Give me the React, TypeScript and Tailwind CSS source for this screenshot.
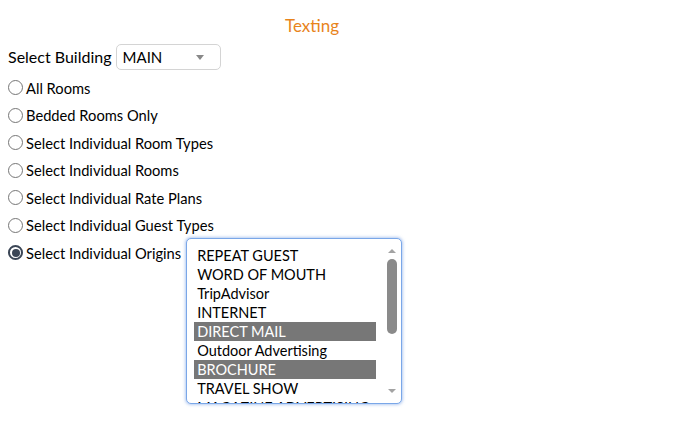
import React, { useState } from 'react';

const SCOPES = [
  'All Rooms',
  'Bedded Rooms Only',
  'Select Individual Room Types',
  'Select Individual Rooms',
  'Select Individual Rate Plans',
  'Select Individual Guest Types',
  'Select Individual Origins',
];

const ORIGINS = [
  'REPEAT GUEST',
  'WORD OF MOUTH',
  'TripAdvisor',
  'INTERNET',
  'DIRECT MAIL',
  'Outdoor Advertising',
  'BROCHURE',
  'TRAVEL SHOW',
  'MAGAZINE ADVERTISING',
];

const Radio: React.FC<{ checked: boolean }> = ({ checked }) => (
  <span
    className={
      checked
        ? 'flex items-center justify-center w-[15px] h-[15px] rounded-full border-2 border-[#3b4656] bg-white shrink-0'
        : 'w-[15px] h-[15px] rounded-full border border-[#767676] bg-white shrink-0'
    }
  >
    {checked && <span className="w-[8px] h-[8px] rounded-full bg-[#3b4656]" />}
  </span>
);

const OriginList: React.FC<{ selected: string[] }> = ({ selected }) => (
  <div className="relative w-[216px] h-[166px] rounded-[5px] border border-[#7aa7e8] shadow-[0_0_3px_1px_rgba(120,160,230,0.55)] bg-white overflow-hidden">
    <div className="pl-[7px] pt-[7px] w-[189px]">
      {ORIGINS.map(o => (
        <div
          key={o}
          className={
            selected.includes(o)
              ? 'h-[19px] pl-[3px] leading-[19px] text-[14.5px] bg-[#777777] text-white whitespace-nowrap'
              : 'h-[19px] pl-[3px] leading-[19px] text-[14.5px] text-black whitespace-nowrap'
          }
        >
          {o}
        </div>
      ))}
    </div>
    {/* scrollbar */}
    <div className="absolute right-[2px] top-[4px] bottom-[4px] w-[14px] flex flex-col items-center">
      <svg width="10" height="8" viewBox="0 0 10 8" className="mt-[4px]">
        <path d="M1 6 L5 2 L9 6 Z" fill="#a3a3a3" />
      </svg>
      <div className="mt-[4px] w-[10px] h-[75px] rounded-full bg-[#8a8a8a]" />
      <div className="flex-1" />
      <svg width="10" height="8" viewBox="0 0 10 8" className="mb-[4px]">
        <path d="M1 2 L5 6 L9 2 Z" fill="#a3a3a3" />
      </svg>
    </div>
  </div>
);

export default function App() {
  const [scope] = useState('Select Individual Origins');

  return (
    <div className="w-[690px] h-[424px] bg-white text-black font-['Lato','Liberation_Sans',sans-serif] overflow-hidden">
      <div className="w-[624px] pt-[15px] text-center text-[17px] leading-[22px] text-[#e8841c]">Texting</div>

      <div className="flex items-center pl-2 mt-[6px] h-[28px]">
        <span className="text-[16px]">Select Building</span>
        <div className="ml-[4px] flex items-center justify-between w-[105px] h-[26px] px-[6px] rounded-[5px] border border-[#d4d4d4]">
          <span className="text-[15px]">MAIN</span>
          <svg width="8" height="5" viewBox="0 0 8 5" className="mr-[10px]">
            <path d="M0 0 H8 L4 5 Z" fill="#888" />
          </svg>
        </div>
      </div>

      <div className="mt-[3px] pl-2">
        {SCOPES.map(s =>
          s === 'Select Individual Origins' ? (
            <div key={s} className="flex items-start">
              <div className="flex items-center h-[27.5px] gap-[3px] text-[14.7px]">
                <Radio checked={scope === s} />
                <span>{s}</span>
              </div>
              <div className="ml-[5px] -mt-[1px]">
                <OriginList selected={['DIRECT MAIL', 'BROCHURE']} />
              </div>
            </div>
          ) : (
            <div key={s} className="flex items-center h-[27.5px] gap-[3px] text-[14.7px]">
              <Radio checked={scope === s} />
              <span>{s}</span>
            </div>
          )
        )}
      </div>
    </div>
  );
}
